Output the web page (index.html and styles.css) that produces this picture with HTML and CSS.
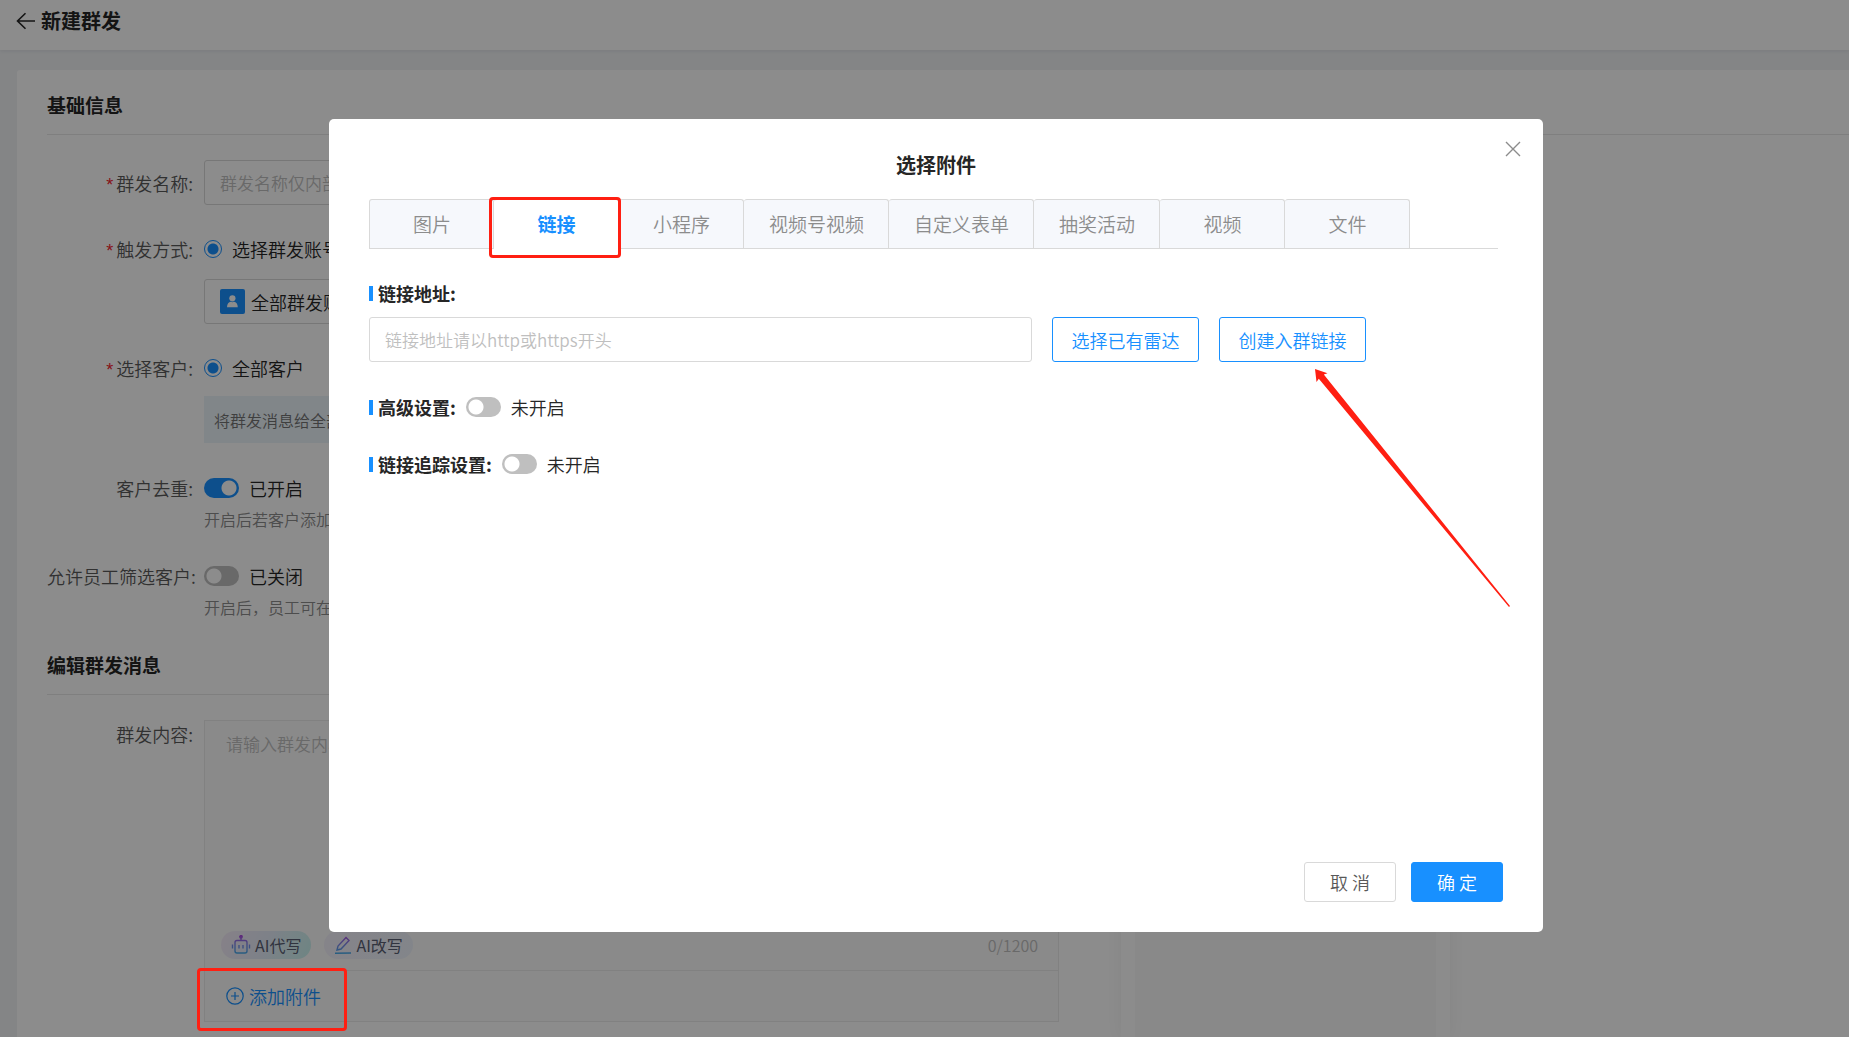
FILE: index.html
```html
<!DOCTYPE html>
<html lang="zh-CN">
<head>
<meta charset="utf-8">
<title>新建群发</title>
<link rel="stylesheet" href="styles.css">
</head>
<body>
<div class="page">
  <header class="topbar">
    <a class="back" href="#" aria-label="返回">
      <svg width="20" height="18" viewBox="0 0 20 18" fill="none" stroke="currentColor" stroke-width="1.6"><path d="M19 9H1.5M9.5 1.2L1.5 9l8 7.8"/></svg>
    </a>
    <h1 class="topbar-title">新建群发</h1>
  </header>

  <main class="card">
    <h2 class="section-title">基础信息</h2>
    <form class="form">
      <div class="row row-name">
        <label class="label required" for="name">群发名称:</label>
        <div class="field"><input class="input" id="name" type="text" placeholder="群发名称仅内部可见"></div>
      </div>
      <div class="row row-trigger">
        <span class="label required">触发方式:</span>
        <div class="field">
          <label class="choice"><input class="radio" type="radio" name="trigger" checked>选择群发账号</label>
          <button class="account" type="button">
            <span class="account-icon">
              <svg width="25" height="25" viewBox="0 0 25 25" fill="#fff"><circle cx="12.4" cy="9.3" r="3.1"/><path d="M7 18.2c0-3.4 1.800-5 3.700-5.400 1 .6 2.400 .6 3.400 0 1.900 .4 3.700 2 3.700 5.400z"/></svg>
            </span>
            <span>全部群发账号</span>
          </button>
        </div>
      </div>
      <div class="row row-customer">
        <span class="label required">选择客户:</span>
        <div class="field">
          <label class="choice"><input class="radio" type="radio" name="customer" checked>全部客户</label>
          <p class="notice">将群发消息给全部客户</p>
        </div>
      </div>
      <div class="row row-switch">
        <label class="label" for="dedupe">客户去重:</label>
        <div class="field">
          <div class="switch-line"><input class="switch" id="dedupe" type="checkbox" checked><span>已开启</span></div>
          <p class="hint">开启后若客户添加多个员工</p>
        </div>
      </div>
      <div class="row row-switch">
        <label class="label" for="filter">允许员工筛选客户:</label>
        <div class="field">
          <div class="switch-line"><input class="switch" id="filter" type="checkbox"><span>已关闭</span></div>
          <p class="hint">开启后，员工可在发送前筛选</p>
        </div>
      </div>
    </form>

    <h2 class="section-title second">编辑群发消息</h2>
    <div class="compose">
      <div class="row row-content">
        <label class="label" for="content">群发内容:</label>
        <div class="editor">
          <textarea class="editor-text" id="content" placeholder="请输入群发内容"></textarea>
          <div class="editor-tools">
            <button class="ai ai-write" type="button">
              <svg width="20" height="20" viewBox="0 0 20 20" fill="none" stroke="url(#ai)" stroke-width="1.400"><defs><linearGradient id="ai" x1="0" y1="0" x2="0" y2="20" gradientUnits="userSpaceOnUse"><stop stop-color="#b14be0"/><stop offset=".5" stop-color="#7b8bea"/><stop offset="1" stop-color="#3fb0ea"/></linearGradient></defs><rect x="4" y="5.500" width="12" height="12.500" rx="2"/><path d="M10 5V2.500M1.500 9.500v4M18.500 9.500v4M8 10v3.500M12 10v3.500"/><circle cx="10" cy="1.800" r="1.200" fill="#b14be0"/></svg>
              <span>AI代写</span>
            </button>
            <button class="ai ai-edit" type="button">
              <svg width="18" height="18" viewBox="1 1 18 18" fill="none" stroke="url(#ai)" stroke-width="1.400"><path d="M4 15l1-4L13 2.500l3 3L8 14zM2 18.200L18 18"/></svg>
              <span>AI改写</span>
            </button>
            <span class="count">0/1200</span>
          </div>
          <div class="editor-attach">
            <button class="attach" type="button">
              <svg width="18" height="18" viewBox="0 0 18 18" fill="none" stroke="currentColor" stroke-width="1.200"><circle cx="9" cy="9" r="8.200"/><path d="M9 5v8M5 9h8"/></svg>
              <span>添加附件</span>
            </button>
            <span class="mark mark-attach"></span>
          </div>
        </div>
      </div>
      <aside class="preview"><div class="preview-screen"></div></aside>
    </div>
  </main>
</div>

<div class="overlay">
  <section class="modal" role="dialog" aria-labelledby="modal-title">
    <button class="close" type="button" aria-label="关闭">
      <svg width="16" height="16" viewBox="0 0 16 16" fill="none" stroke="currentColor" stroke-width="1.400"><path d="M1 1l14 14M15 1L1 15"/></svg>
    </button>
    <h2 class="modal-title" id="modal-title">选择附件</h2>
    <nav class="tabs">
      <button class="tab" type="button">图片</button>
      <button class="tab active" type="button">链接<span class="mark mark-tab"></span></button>
      <button class="tab" type="button">小程序</button>
      <button class="tab" type="button">视频号视频</button>
      <button class="tab" type="button">自定义表单</button>
      <button class="tab" type="button">抽奖活动</button>
      <button class="tab" type="button">视频</button>
      <button class="tab" type="button">文件</button>
    </nav>
    <div class="modal-body">
      <label class="bar-label" for="url">链接地址:</label>
      <div class="url-line">
        <input class="input" id="url" type="text" placeholder="链接地址请以http或https开头">
        <button class="btn btn-outline" type="button">选择已有雷达</button>
        <button class="btn btn-outline" type="button">创建入群链接
          <svg class="arrow" width="200" height="242" viewBox="0 0 200 242" fill="#ff1f12"><path d="M1 1L13.500 5.300L9.800 6.500L196 238L195 239L4.800 10.800L2.500 14z"/></svg>
        </button>
      </div>
      <div class="setting"><label class="bar-label" for="advanced">高级设置:</label><input class="switch" id="advanced" type="checkbox"><span>未开启</span></div>
      <div class="setting"><label class="bar-label" for="track">链接追踪设置:</label><input class="switch" id="track" type="checkbox"><span>未开启</span></div>
    </div>
    <footer class="modal-footer">
      <button class="btn btn-default" type="button">取 消</button>
      <button class="btn btn-primary" type="button">确 定</button>
    </footer>
  </section>
</div>
</body>
</html>
```
FILE: styles.css
```css
* { box-sizing: border-box; }

body {
  margin: 0;
  background: #f0f2f5;
  color: #262626;
  font: 350 18px/24px "Noto Sans CJK SC", "Open Sans", sans-serif;
}

h1, h2, p { margin: 0; }

button, input, textarea { font: inherit; color: inherit; }
button { margin: 0; padding: 0; border: 0; background: none; cursor: pointer; }

/* Page */
.page {
  display: flex;
  flex-direction: column;
  min-height: 100vh;
}
.topbar {
  display: flex;
  align-items: center;
  gap: 5px;
  height: 50px;
  padding: 0 16px 8px;
  background: #fff;
  box-shadow: 0 1px 4px rgba(0, 21, 41, .08);
}
.back { display: flex; color: #262626; }
.topbar-title { font-size: 20px; font-weight: 700; line-height: 28px; }

.card {
  flex: 1;
  display: flex;
  flex-direction: column;
  margin: 20px 0 0 17px;
  padding: 20px 0 0 30px;
  background: #fff;
  border-radius: 3px 0 0 0;
}
.section-title {
  padding: 2px 0 16px;
  border-bottom: 1px solid #e8e8e8;
  font-size: 19px;
  font-weight: 700;
  line-height: 26px;
}
.section-title.second { max-width: 1402px; margin-top: 31px; }

.row { display: flex; }
.label {
  flex: none;
  width: 157px;
  padding-right: 11px;
  text-align: right;
  color: #595959;
  white-space: nowrap;
}
.required::before {
  content: "*";
  margin-right: 3px;
  color: #f5222d;
  font-family: "Liberation Sans", sans-serif;
}
.field { flex: 1; max-width: 855px; }
.input {
  width: 100%;
  height: 45px;
  padding: 0 15px;
  border: 1px solid #d9d9d9;
  border-radius: 3px;
  background: #fff;
  font-size: 17px;
}
::placeholder { color: #bfbfbf; opacity: 1; }

.row-name { padding-top: 25px; }
.row-name .label { padding-top: 11px; }
.row-trigger, .row-customer { padding-top: 32px; }
.choice { display: flex; align-items: center; gap: 10px; }
.radio {
  appearance: none;
  width: 18px;
  height: 18px;
  margin: 0;
  border: 1px solid #1890ff;
  border-radius: 50%;
  background: radial-gradient(circle, #1890ff 5px, transparent 6px);
}
.account {
  display: flex;
  align-items: center;
  gap: 6px;
  width: 100%;
  height: 45px;
  margin-top: 18px;
  padding: 0 15px;
  border: 1px solid #d9d9d9;
  border-radius: 3px;
}
.account-icon {
  display: flex;
  border-radius: 2px;
  background: #1890ff;
}
.notice {
  margin-top: 16px;
  padding: 12px 10px 11px;
  background: #ebf4fa;
  color: #737373;
  font-size: 16px;
}
.row-switch { padding-top: 33px; }
.switch-line { display: flex; align-items: center; gap: 10px; }
.switch {
  appearance: none;
  flex: none;
  width: 35px;
  height: 20px;
  margin: 0;
  border-radius: 10px;
  background: radial-gradient(circle at 10px 10px, #fff 7px, transparent 8px) #bfbfbf;
}
.switch:checked {
  background: radial-gradient(circle at 25px 10px, #fff 7px, transparent 8px) #1890ff;
}
.hint {
  margin-top: 7px;
  color: #8c8c8c;
  font-size: 16px;
}

/* Message editor */
.compose { flex: 1; display: flex; gap: 62px; }
.row-content { flex: none; align-items: flex-start; padding: 25px 0 15px; }
.row-content .label { padding-top: 2px; }
.editor {
  display: flex;
  flex-direction: column;
  width: 855px;
  border: 1px solid #ebebeb;
  background: #fbfbfb;
}
.editor-text {
  height: 210px;
  padding: 11px 21px;
  border: 0;
  outline: 0;
  resize: none;
  background: transparent;
  font-size: 17px;
}
.editor-tools {
  display: flex;
  align-items: center;
  gap: 13px;
  height: 40px;
  padding: 0 20px 12px 16px;
  border-bottom: 1px solid #ebebeb;
}
.ai {
  display: flex;
  align-items: center;
  gap: 4px;
  height: 28px;
  padding: 0 10px;
  border-radius: 14px;
  color: #595f73;
  font-size: 16px;
  font-weight: 400;
}
.ai-write { background: linear-gradient(115deg, #f5ecf8, #e4ecf8 50%, #c8f2ee); }
.ai-edit { background: linear-gradient(115deg, #f3f0fa, #edf3fb); }
.count { margin-left: auto; color: #bfbfbf; font-size: 16px; }
.editor-attach {
  position: relative;
  display: flex;
  align-items: center;
  height: 50px;
  padding-left: 21px;
}
.attach { display: flex; align-items: center; gap: 5px; color: #1890ff; }

.preview {
  display: flex;
  width: 329px;
  padding: 0 14px;
  box-shadow: 0 0 15px rgba(0, 0, 0, .06);
  clip-path: inset(0 -20px);
}
.preview-screen { flex: 1; background: #f9f9f9; }

/* Dialog */
.overlay {
  position: fixed;
  inset: 0;
  display: flex;
  justify-content: center;
  align-items: flex-start;
  padding: 119px 0 0 23px;
  background: rgba(0, 0, 0, .45);
}
.modal {
  position: relative;
  display: flex;
  flex-direction: column;
  width: 66%;
  min-width: 1214px;
  padding: 30px 40px;
  border-radius: 5px;
  background: #fff;
}
.close {
  position: absolute;
  top: 22px;
  right: 22px;
  display: flex;
  color: #8c8c8c;
}
.modal-title {
  margin-bottom: 18px;
  text-align: center;
  font-size: 20px;
  font-weight: 700;
  line-height: 32px;
}
.tabs {
  display: flex;
  margin-right: 5px;
  border-bottom: 1px solid #d9d9d9;
}
.tab {
  position: relative;
  min-width: 125px;
  height: 49px;
  padding: 0 24px 1px 25px;
  border: solid #d9d9d9;
  border-width: 1px 1px 0 0;
  border-radius: 3px 3px 0 0;
  background: #f6f8fc;
  color: #8c8c8c;
  font-size: 19px;
}
.tab:first-child { border-left-width: 1px; }
.tab.active {
  margin-bottom: -1px;
  height: 50px;
  padding-bottom: 2px;
  background: #fff;
  color: #1890ff;
  font-weight: 700;
}
.modal-body { min-height: 613px; padding-top: 32px; }
.bar-label {
  display: flex;
  align-items: center;
  gap: 5px;
  font-weight: 700;
}
.bar-label::before {
  content: "";
  width: 4px;
  height: 15px;
  background: #1890ff;
}
.url-line {
  display: flex;
  gap: 20px;
  margin: 12px 137px 33px 0;
}
.url-line .input { flex: 1; }
.btn {
  border: 1px solid #d9d9d9;
  border-radius: 3px;
  background: #fff;
}
.btn-outline {
  position: relative;
  width: 147px;
  height: 45px;
  border-color: #1890ff;
  color: #1890ff;
}
.setting {
  display: flex;
  align-items: center;
  gap: 10px;
  margin-bottom: 33px;
}
.modal-footer {
  display: flex;
  justify-content: flex-end;
  gap: 15px;
}
.modal-footer .btn { width: 92px; height: 40px; }
.btn-default { color: #595959; }
.modal-footer .btn-primary {
  border-color: #1890ff;
  background: #1890ff;
  color: #fff;
}

/* Red annotations lying over the interface */
.mark {
  position: absolute;
  z-index: 2;
  border: 3px solid #ff1f12;
  border-radius: 4px;
}
.mark-tab { inset: -3px -3px -9px -5px; }
.mark-attach { top: -3px; left: -8px; width: 150px; height: 63px; }
.arrow { position: absolute; top: 50px; left: 94px; pointer-events: none; }
```
